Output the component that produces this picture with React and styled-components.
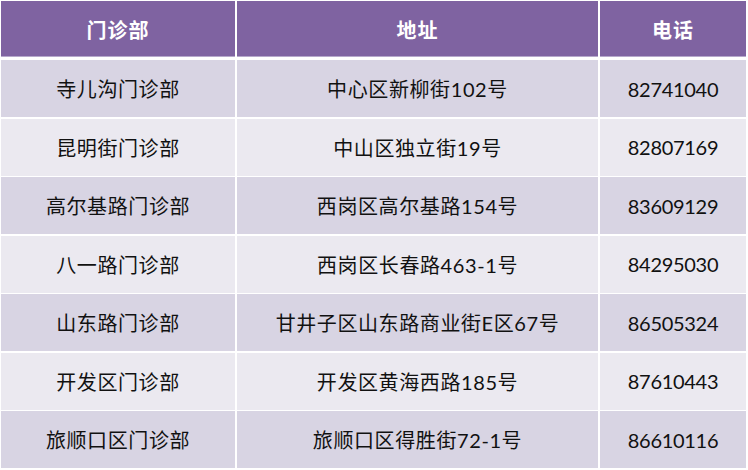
import styled, { createGlobalStyle } from "styled-components";

const GlobalStyle = createGlobalStyle`
  html, body {
    margin: 0;
    padding: 0;
    background: #ffffff;
  }
  body {
    font-family: "Lato", "Noto Sans CJK SC", sans-serif;
  }
`;

const Page = styled.div`
  width: 748px;
  height: 470px;
  padding: 1px;
  box-sizing: border-box;
`;

const Table = styled.div`
  display: flex;
  flex-direction: column;
  gap: 1.5px;
  width: 746px;
`;

const Row = styled.div`
  display: grid;
  grid-template-columns: 234px 361px 146px;
  column-gap: 2px;
  height: ${(p) => (p.$head ? "56px" : "57px")};
  margin-bottom: ${(p) => (p.$head ? "1.5px" : "0")};
`;

const Cell = styled.div`
  display: flex;
  align-items: center;
  justify-content: center;
  background: ${(p) => (p.$head ? "#7f63a1" : p.$alt ? "#ebe9f0" : "#d8d4e3")};
  color: ${(p) => (p.$head ? "#ffffff" : "#111111")};
  font-size: 20px;
  font-weight: ${(p) => (p.$head ? 700 : 400)};
  letter-spacing: ${(p) => (p.$head ? "1px" : p.$num ? "-0.3px" : "0.6px")};
  box-shadow: ${(p) => (p.$head ? "inset 0 -1px 0 #b6a8cb" : "none")};
  white-space: nowrap;
`;

const rows = [
  ["寺儿沟门诊部", "中心区新柳街102号", "82741040"],
  ["昆明街门诊部", "中山区独立街19号", "82807169"],
  ["高尔基路门诊部", "西岗区高尔基路154号", "83609129"],
  ["八一路门诊部", "西岗区长春路463-1号", "84295030"],
  ["山东路门诊部", "甘井子区山东路商业街E区67号", "86505324"],
  ["开发区门诊部", "开发区黄海西路185号", "87610443"],
  ["旅顺口区门诊部", "旅顺口区得胜街72-1号", "86610116"],
];

const App = () => {
  return (
    <Page>
      <GlobalStyle />
      <Table>
        <Row $head>
          <Cell $head>门诊部</Cell>
          <Cell $head>地址</Cell>
          <Cell $head>电话</Cell>
        </Row>
        {rows.map((r, i) => (
          <Row key={r[2]}>
            {r.map((text, j) => (
              <Cell key={text} $alt={i % 2 === 1} $num={j === 2}>
                {text}
              </Cell>
            ))}
          </Row>
        ))}
      </Table>
    </Page>
  );
};

export default App;
